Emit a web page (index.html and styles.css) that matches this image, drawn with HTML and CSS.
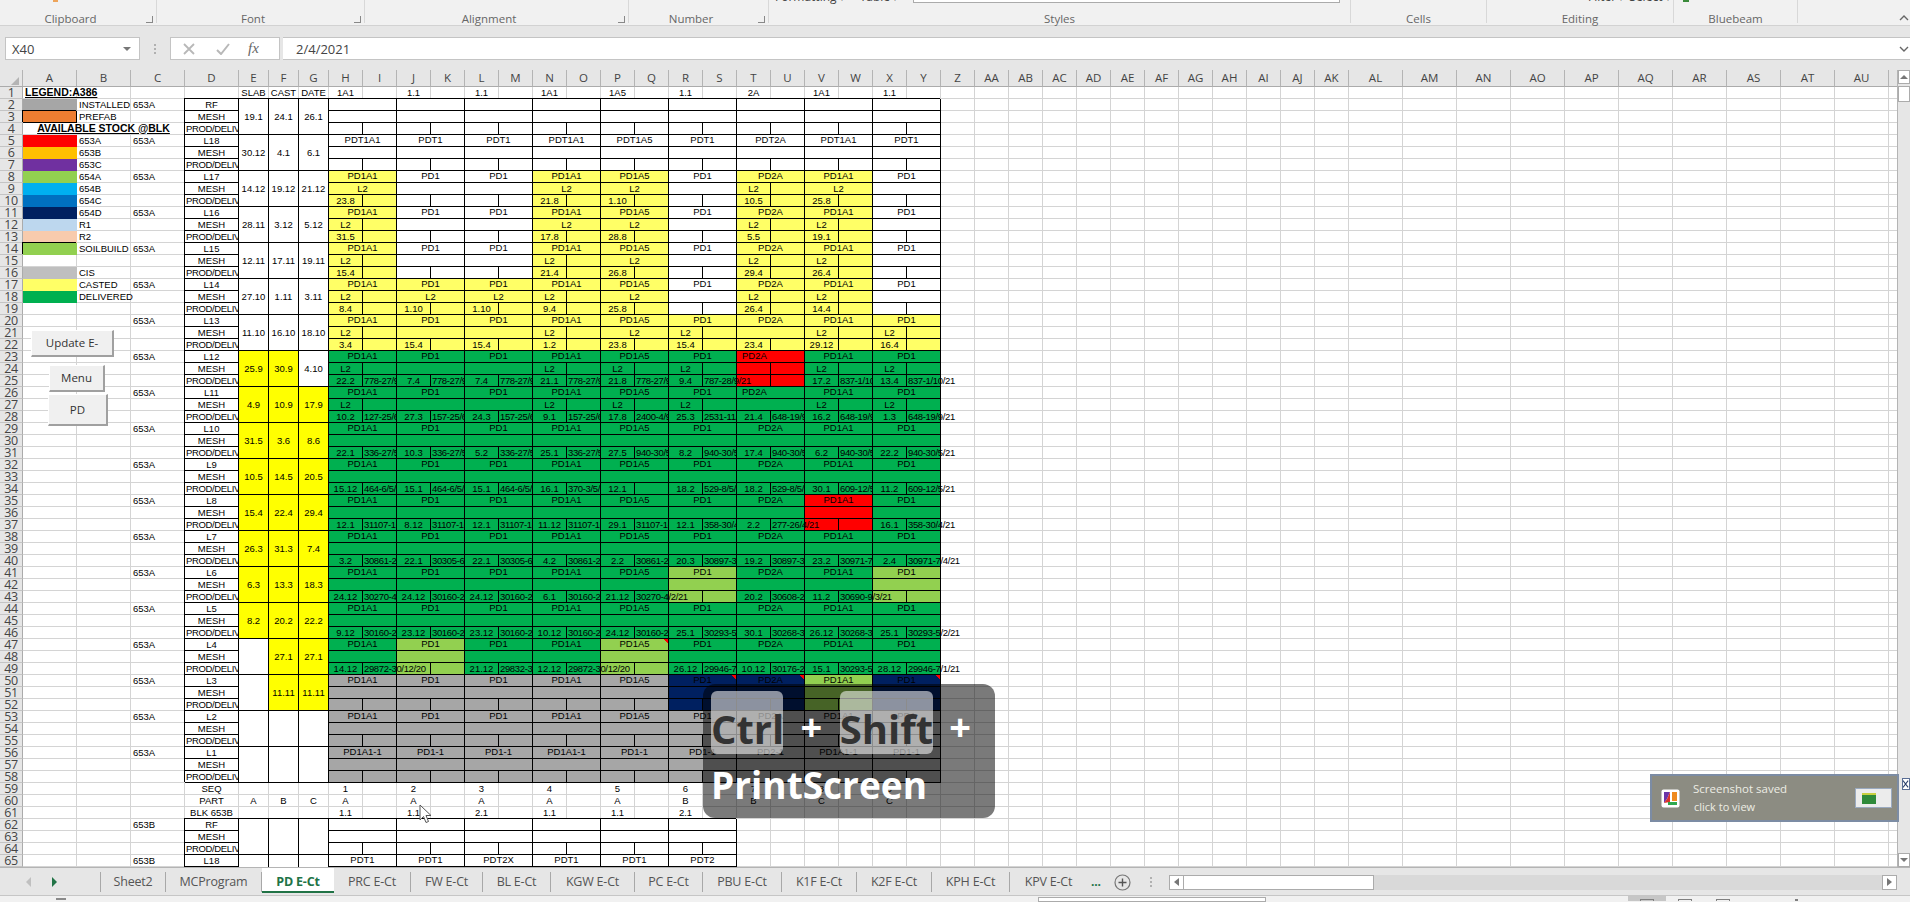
FILE: index.html
```html
<!DOCTYPE html>
<html>
	<head>
		<meta charset="UTF-8">
		<title>PD E-Ct - Excel</title>
		<link rel="stylesheet" href="styles.css">
	</head>

	<body>
		<div class="page">
			<div class="ribbon">
				<div class="group launch clip-group">
					<div class="peek"><i class="orange-bit"></i></div>
					<div class="group-name">Clipboard</div>
				</div>
				<div class="group launch font-group">
					<div class="peek"></div>
					<div class="group-name">Font</div>
				</div>
				<div class="group launch align-group">
					<div class="peek"></div>
					<div class="group-name">Alignment</div>
				</div>
				<div class="group launch number-group">
					<div class="peek"></div>
					<div class="group-name">Number</div>
				</div>
				<div class="group styles-group">
					<div class="peek styles-peek">
						<span>Formatting <small>▾</small></span>
						<span>Table <small>▾</small></span>
						<i class="gallery"></i>
					</div>
					<div class="group-name">Styles</div>
				</div>
				<div class="group cells-group">
					<div class="peek"></div>
					<div class="group-name">Cells</div>
				</div>
				<div class="group editing-group">
					<div class="peek editing-peek">
						<span>Filter <small>▾</small></span>
						<span>Select <small>▾</small></span>
					</div>
					<div class="group-name">Editing</div>
				</div>
				<div class="group bluebeam-group">
					<div class="peek"><i class="green-bit"></i></div>
					<div class="group-name">Bluebeam</div>
				</div>
				<div class="ribbon-end">
					<svg width="10" height="6" viewBox="0 0 10 6"><path d="M1 5 L5 1 L9 5" fill="none" stroke="#666" stroke-width="1.4"/></svg>
				</div>
			</div>

			<div class="ribbon-gap"></div>

			<div class="formula-bar">
				<div class="name-box">
					<span>X40</span>
					<i class="name-arrow"></i>
				</div>
				<div class="grip"><i></i><i></i><i></i></div>
				<div class="fx-box">
					<svg width="12" height="12" viewBox="0 0 12 12"><path d="M1 1 L11 11 M11 1 L1 11" stroke="#b8b8b8" stroke-width="1.8"/></svg>
					<svg width="14" height="12" viewBox="0 0 14 12"><path d="M1 7 L5 11 L13 1" fill="none" stroke="#b8b8b8" stroke-width="2"/></svg>
					<span class="fx">fx</span>
				</div>
				<div class="formula-input">
					<span>2/4/2021</span>
					<svg width="10" height="6" viewBox="0 0 10 6"><path d="M1 1 L5 5 L9 1" fill="none" stroke="#666" stroke-width="1.4"/></svg>
				</div>
			</div>

			<div class="formula-gap"></div>

			<div class="sheet-row">
				<div class="sheet">
					<table class="grid" id="grid"></table>
					<button class="xl-btn btn-update">Update E-</button>
					<button class="xl-btn btn-menu">Menu</button>
					<button class="xl-btn btn-pd">PD</button>
					<i class="corner"></i>
				</div>
				<div class="vscroll">
					<div class="v-arrow"><i class="tri-up"></i></div>
					<div class="v-thumb"></div>
					<div class="v-arrow"><i class="tri-down"></i></div>
				</div>
			</div>

			<div class="tabbar">
				<div class="tab-nav">
					<i class="nav-left"></i>
					<i class="nav-right"></i>
				</div>
				<div class="tab tab-65">Sheet2</div>
				<div class="tab tab-97">MCProgram</div>
				<div class="tab active">PD E-Ct</div>
				<div class="tab tab-77">PRC E-Ct</div>
				<div class="tab tab-72">FW E-Ct</div>
				<div class="tab tab-68">BL E-Ct</div>
				<div class="tab tab-84">KGW E-Ct</div>
				<div class="tab tab-68">PC E-Ct</div>
				<div class="tab tab-79">PBU E-Ct</div>
				<div class="tab tab-75">K1F E-Ct</div>
				<div class="tab tab-75">K2F E-Ct</div>
				<div class="tab tab-78">KPH E-Ct</div>
				<div class="tab tab-77 tab-last">KPV E-Ct</div>
				<div class="tab-more">...</div>
				<div class="tab-add">
					<svg width="17" height="17" viewBox="0 0 17 17"><circle cx="8.5" cy="8.5" r="7.5" fill="none" stroke="#777" stroke-width="1.2"/><path d="M8.5 4.5 V12.5 M4.5 8.5 H12.5" stroke="#555" stroke-width="1.4"/></svg>
				</div>
				<div class="grip tab-grip"><i></i><i></i><i></i></div>
				<div class="hscroll">
					<div class="h-arrow"><i class="tri-left"></i></div>
					<div class="h-thumb"></div>
					<div class="h-track"></div>
					<div class="h-arrow"><i class="tri-right"></i></div>
				</div>
			</div>

			<div class="statusbar">
				<i class="status-mark"></i>
				<i class="status-box"></i>
				<i class="view view-on"><b></b></i>
				<i class="view"><b></b></i>
				<i class="view"><b></b></i>
				<i class="zoom-mark"></i>
			</div>

			<svg class="cursor" width="13" height="20" viewBox="0 0 13 20"><path d="M1 1 V16 L4.5 12.5 L7 18.5 L9.5 17.5 L7 11.5 H12 Z" fill="#fff" stroke="#555"/></svg>

			<div class="shot-keys">
				<div class="keys-row">
					<div class="key key-ctrl">Ctrl</div>
					<div class="plus">+</div>
					<div class="key key-shift">Shift</div>
					<div class="plus">+</div>
				</div>
				<div class="keys-word">PrintScreen</div>
			</div>

			<div class="toast">
				<svg class="toast-icon" width="19" height="19" viewBox="0 0 19 19">
					<rect x="0.5" y="0.5" width="18" height="18" rx="2" fill="#fff"/>
					<path d="M3 3 H9 L6 10 L3 14 Z" fill="#6a35a8"/>
					<path d="M3 14 L6 10 L9 3 V13 Z" fill="#d8332c"/>
					<rect x="11" y="3" width="5" height="9" fill="#ef8a1f"/>
					<rect x="7" y="13" width="9" height="3" fill="#2fa84f"/>
				</svg>
				<div class="toast-text">
					<div>Screenshot saved</div>
					<div class="toast-sub">click to view</div>
				</div>
				<div class="toast-thumb"><i></i></div>
			</div>
			<div class="toast-close">
				<svg width="7" height="10" viewBox="0 0 7 10"><path d="M0 1 L6 9 M6 1 L0 9" stroke="#2a3f6a" stroke-width="1.2"/></svg>
			</div>
		</div>
		<script src="script.js"></script>
	</body>
</html>
```

FILE: styles.css
```css
html, body {
	margin: 0;
	padding: 0;
}
.page {
	position: relative;
	display: flex;
	flex-direction: column;
	width: 1910px;
	height: 902px;
	overflow: hidden;
	background: #E6E6E6;
	font-family: "Open Sans", sans-serif;
}

/* ribbon */
.ribbon {
	display: flex;
	height: 27px;
	background: #F1F1F1;
	border-bottom: 1px solid #D2D2D2;
	box-sizing: border-box;
}
.group {
	position: relative;
	box-sizing: border-box;
	height: 23px;
	border-right: 1px solid #D8D8D8;
}
.group.launch {
	padding-right: 15px;
}
.group.launch::after {
	content: "";
	position: absolute;
	right: 3px;
	top: 16px;
	width: 6px;
	height: 6px;
	border-right: 1px solid #888;
	border-bottom: 1px solid #888;
}
.group-name {
	margin-top: 10px;
	height: 14px;
	line-height: 14px;
	font-size: 11.5px;
	color: #666;
	text-align: center;
}
.clip-group { width: 157px; }
.font-group { width: 208px; }
.align-group { width: 264px; }
.number-group { width: 140px; }
.styles-group { width: 582px; }
.cells-group { width: 136px; }
.editing-group { width: 187px; }
.bluebeam-group { width: 124px; }
.ribbon-end {
	flex: 1;
	display: flex;
	justify-content: flex-end;
	padding: 15px 1px 0 0;
}
.peek {
	display: flex;
	align-items: flex-end;
	height: 2px;
	overflow: hidden;
	font-size: 12px;
	line-height: 14px;
	color: #444;
}
.peek small {
	font-size: 8px;
}
.styles-peek {
	height: 5px;
	margin-bottom: -3px;
	padding-left: 6px;
	gap: 16px;
}
.editing-peek {
	height: 5px;
	margin-bottom: -3px;
	padding-left: 101px;
	gap: 6px;
}
.gallery {
	display: block;
	box-sizing: border-box;
	width: 427px;
	height: 3px;
	margin-bottom: 2px;
	background: #FFF;
	border: 1px solid #ABABAB;
	border-top: none;
}
.orange-bit {
	display: block;
	width: 5px;
	height: 2px;
	margin-left: 53px;
	background: #EDA45A;
}
.green-bit {
	display: block;
	width: 6px;
	height: 2px;
	margin-left: 9px;
	background: #3A8A3A;
}
.ribbon-gap {
	height: 11px;
	background: #E6E6E6;
}

/* formula bar */
.formula-bar {
	display: flex;
	height: 23px;
	background: #E6E6E6;
}
.name-box {
	display: flex;
	align-items: center;
	justify-content: space-between;
	box-sizing: border-box;
	width: 135px;
	margin-left: 5px;
	padding: 0 8px 0 6px;
	background: #FFF;
	border: 1px solid #C4C4C4;
	font-size: 13px;
	color: #444;
}
.name-arrow {
	width: 0;
	height: 0;
	border-top: 4px solid #777;
	border-left: 4px solid transparent;
	border-right: 4px solid transparent;
}
.grip {
	display: flex;
	flex-direction: column;
	justify-content: center;
	gap: 2px;
	width: 30px;
	align-items: center;
}
.grip i {
	display: block;
	width: 2px;
	height: 2px;
	background: #B0B0B0;
}
.fx-box {
	display: flex;
	align-items: center;
	box-sizing: border-box;
	width: 110px;
	padding-left: 12px;
	gap: 21px;
	background: #FFF;
	border: 1px solid #C4C4C4;
}
.fx {
	margin-left: -3px;
	font-family: "Liberation Serif", serif;
	font-style: italic;
	font-size: 15px;
	color: #666;
}
.formula-input {
	flex: 1;
	display: flex;
	align-items: center;
	justify-content: space-between;
	box-sizing: border-box;
	margin-left: 3px;
	padding: 0 1px 0 13px;
	background: #FFF;
	border-top: 1px solid #C4C4C4;
	border-bottom: 1px solid #C4C4C4;
	font-size: 13px;
	color: #444;
}
.formula-gap {
	height: 10px;
}

/* sheet */
.sheet-row {
	display: flex;
	height: 797px;
	border-bottom: 1px solid #B4B4B4;
	box-sizing: content-box;
}
.sheet {
	position: relative;
	width: 1898px;
	overflow: hidden;
	background: #FFF;
	box-sizing: border-box;
	border-right: 1px solid #B4B4B4;
}
.grid {
	table-layout: fixed;
	width: 1898px;
	border-collapse: separate;
	border-spacing: 0;
	font-family: "Liberation Sans", sans-serif;
	font-size: 9.5px;
	color: #000;
}
.grid td, .grid th {
	box-sizing: border-box;
	height: 12px;
	padding: 0;
	overflow: hidden;
	white-space: nowrap;
	line-height: 11px;
	text-align: center;
	font-weight: normal;
	border-right: 1px solid #D4D4D4;
	border-bottom: 1px solid #D4D4D4;
}
.grid thead th {
	height: 16px;
	background: #E6E6E6;
	border-right: 1px solid #B4B4B4;
	border-bottom: 1px solid #ABABAB;
	font-family: "Open Sans", sans-serif;
	font-size: 11.5px;
	line-height: 16px;
	color: #444;
}
.grid tbody th {
	background: #E6E6E6;
	border-right: 1px solid #ABABAB;
	border-bottom: 1px solid #C4C4C4;
	font-family: "Open Sans", sans-serif;
	font-size: 12.5px;
	letter-spacing: -0.4px;
	line-height: 11px;
	color: #444;
}
.grid tr.top td, .grid tr.top th {
	height: 11px;
}
.grid td.txt {
	text-align: left;
	padding-left: 2px;
}
.grid td.spill {
	overflow: visible;
}
.grid td.tight {
	text-align: left;
	padding-left: 1px;
	letter-spacing: -0.35px;
}
.grid td.lab {
	line-height: 10px;
	padding-bottom: 1px;
}
.grid td.lab-left {
	text-align: left;
	padding-left: 5px;
}
.grid td.head {
	font-weight: bold;
	text-decoration: underline;
	font-size: 10.5px;
}
.grid td.box {
	border-right-color: #000;
	border-bottom-color: #000;
	box-shadow: -1px -1px 0 #000;
}
.grid td.note {
	background-image: linear-gradient(225deg, #FF0000 3.5px, transparent 3.5px);
}

/* fills, legend ones hide their gridlines */
.f-installed { background-color: #A6A6A6; }
.f-prefab { background-color: #ED7D31; }
.grid td.f-red { background-color: #FF0000; }
.f-amber { background-color: #FFC000; }
.f-purple { background-color: #7030A0; }
.f-lime { background-color: #92D050; }
.f-sky { background-color: #00B0F0; }
.f-blue { background-color: #0070C0; }
.f-navy { background-color: #002060; }
.f-pale { background-color: #BDD7EE; }
.f-peach { background-color: #F8CBAD; }
.f-silver { background-color: #BFBFBF; }
.f-cast { background-color: #FFFF66; }
.f-done { background-color: #00B050; }
.f-sun { background-color: #FFFF00; }
.grid td.legend.f-installed { border-color: #A6A6A6; }
.grid td.legend.f-red { border-color: #FF0000; }
.grid td.legend.f-amber { border-color: #FFC000; }
.grid td.legend.f-purple { border-color: #7030A0; }
.grid td.legend.f-lime { border-color: #92D050; }
.grid td.legend.f-sky { border-color: #00B0F0; }
.grid td.legend.f-blue { border-color: #0070C0; }
.grid td.legend.f-navy { border-color: #002060; }
.grid td.legend.f-pale { border-color: #BDD7EE; }
.grid td.legend.f-peach { border-color: #F8CBAD; }
.grid td.legend.f-silver { border-color: #BFBFBF; }
.grid td.legend.f-cast { border-color: #FFFF66; }
.grid td.legend.f-done { border-color: #00B050; }

/* macro buttons on the sheet */
.xl-btn {
	position: absolute;
	padding: 0;
	background: #F0F0F0;
	border: none;
	border-top: 1px solid #FFF;
	border-left: 1px solid #FFF;
	border-right: 2px solid #A0A0A0;
	border-bottom: 2px solid #A0A0A0;
	font-family: "Open Sans", sans-serif;
	font-size: 11.5px;
	color: #333;
}
.btn-update { left: 31px; top: 260px; width: 83px; height: 27px; }
.btn-menu { left: 49px; top: 295px; width: 56px; height: 27px; }
.btn-pd { left: 48px; top: 324px; width: 60px; height: 32px; }
.corner {
	position: absolute;
	left: 11px;
	top: 7px;
	width: 0;
	height: 0;
	border-bottom: 8px solid #B4B4B4;
	border-left: 8px solid transparent;
}

/* scrollbars */
.vscroll {
	display: flex;
	flex-direction: column;
	width: 12px;
	background: #E6E6E6;
}
.v-arrow {
	display: flex;
	align-items: center;
	justify-content: center;
	height: 14px;
	background: #FFF;
	border: 1px solid #ABABAB;
	box-sizing: border-box;
}
.v-thumb {
	flex: 1;
	background: #FFF;
	border: 1px solid #ABABAB;
	box-sizing: border-box;
	max-height: 16px;
	margin-top: 2px;
	margin-bottom: auto;
}
.tri-up {
	border-bottom: 4px solid #777;
	border-left: 4px solid transparent;
	border-right: 4px solid transparent;
}
.tri-down {
	border-top: 4px solid #777;
	border-left: 4px solid transparent;
	border-right: 4px solid transparent;
}
.tri-left {
	border-right: 5px solid #777;
	border-top: 4px solid transparent;
	border-bottom: 4px solid transparent;
}
.tri-right {
	border-left: 5px solid #777;
	border-top: 4px solid transparent;
	border-bottom: 4px solid transparent;
}

/* sheet tabs */
.tabbar {
	display: flex;
	align-items: flex-start;
	height: 28px;
	background: #E6E6E6;
	font-size: 12.5px;
	letter-spacing: -0.2px;
	color: #555;
}
.tab-nav {
	box-sizing: border-box;
	display: flex;
	align-items: center;
	gap: 21px;
	width: 101px;
	height: 20px;
	margin-top: 4px;
	padding-left: 26px;
	border-right: 1px solid #A8A8A8;
}
.nav-left {
	border-right: 5px solid #C0C0C0;
	border-top: 5px solid transparent;
	border-bottom: 5px solid transparent;
}
.nav-right {
	border-left: 5px solid #217346;
	border-top: 5px solid transparent;
	border-bottom: 5px solid transparent;
}
.tab {
	box-sizing: border-box;
	height: 20px;
	margin-top: 4px;
	line-height: 20px;
	text-align: center;
	border-right: 1px solid #A8A8A8;
	white-space: nowrap;
}
.tab-65 { width: 65px; }
.tab-68 { width: 68px; }
.tab-72 { width: 72px; }
.tab-75 { width: 75px; }
.tab-77 { width: 77px; }
.tab-78 { width: 78px; }
.tab-79 { width: 79px; }
.tab-84 { width: 84px; }
.tab-97 { width: 96px; }
.tab-last {
	border-right: none;
}
.tab.active {
	width: 72px;
	height: 25px;
	margin-top: 0;
	line-height: 27px;
	background: #FFF;
	border-right: none;
	border-bottom: 2px solid #217346;
	font-weight: bold;
	color: #217346;
}
.tab-more {
	margin-top: 4px;
	margin-left: 4px;
	width: 11px;
	line-height: 20px;
	font-weight: bold;
	font-size: 12px;
	color: #217346;
}
.tab-add {
	margin-left: 12px;
	margin-top: 6px;
	height: 17px;
}
.tab-grip {
	width: 16px;
	margin-left: 12px;
	margin-top: 9px;
}
.hscroll {
	display: flex;
	width: 728px;
	height: 15px;
	margin-left: auto;
	margin-top: 7px;
	margin-right: 13px;
	background: #D9D9D9;
}
.h-arrow {
	display: flex;
	align-items: center;
	justify-content: center;
	box-sizing: border-box;
	width: 15px;
	background: #FFF;
	border: 1px solid #ABABAB;
}
.h-thumb {
	box-sizing: border-box;
	width: 190px;
	background: #FFF;
	border: 1px solid #ABABAB;
	border-left: none;
}
.h-track {
	flex: 1;
}

/* status bar */
.statusbar {
	display: flex;
	align-items: flex-start;
	flex: 1;
	background: #F1F1F1;
	border-top: 1px solid #C6C6C6;
}
.status-mark {
	width: 10px;
	height: 2px;
	margin-left: 56px;
	margin-top: 2px;
	background: #8A8A8A;
}
.status-box {
	box-sizing: border-box;
	width: 228px;
	height: 5px;
	margin-left: 972px;
	margin-top: 1px;
	background: #FFF;
	border: 1px solid #ABABAB;
}
.view {
	display: flex;
	justify-content: center;
	width: 38px;
	height: 5px;
	padding-top: 3px;
	box-sizing: border-box;
}
.view-on {
	margin-left: 362px;
	background: #C6C6C6;
}
.view b {
	display: block;
	box-sizing: border-box;
	width: 14px;
	height: 2px;
	border: 1px solid #808080;
	border-bottom: none;
}
.zoom-mark {
	width: 3px;
	height: 2px;
	margin-left: 53px;
	margin-top: 3px;
	background: #808080;
}

/* things that lie on top of the window */
.cursor {
	position: absolute;
	left: 419px;
	top: 804px;
}
.shot-keys {
	position: absolute;
	left: 703px;
	top: 684px;
	box-sizing: border-box;
	width: 292px;
	height: 134px;
	padding: 7px 8px;
	background: rgba(0, 0, 0, 0.52);
	border-radius: 12px;
	font-weight: bold;
	color: #FFF;
}
.keys-row {
	display: flex;
	align-items: center;
	height: 63px;
}
.key {
	height: 63px;
	padding-top: 10px;
	box-sizing: border-box;
	background: rgba(255, 255, 255, 0.55);
	border-radius: 6px;
	font-size: 40px;
	line-height: 56px;
	color: #333;
	text-align: center;
	white-space: nowrap;
}
.key-ctrl {
	width: 72px;
}
.key-shift {
	width: 94px;
}
.plus {
	width: 58px;
	padding-top: 6px;
	font-size: 38px;
	text-align: center;
}
.plus:last-child {
	width: 55px;
}
.keys-word {
	height: 60px;
	font-size: 37px;
	line-height: 60px;
	margin-top: 1px;
	white-space: nowrap;
}
.toast {
	position: absolute;
	left: 1650px;
	top: 774px;
	display: flex;
	align-items: center;
	box-sizing: border-box;
	width: 249px;
	height: 48px;
	padding: 0 5px 0 9px;
	background: #8C8C82;
	border: 2px solid #7C8CA4;
	font-size: 11.5px;
	color: #ECECE4;
}
.toast-text {
	flex: 1;
	margin-left: 13px;
	line-height: 17px;
	margin-top: -2px;
}
.toast-sub {
	margin-top: 1px;
	margin-left: 1px;
	font-size: 11px;
}
.toast-thumb {
	box-sizing: border-box;
	width: 37px;
	height: 20px;
	padding: 4px 0 0 6px;
	background: #ECECEC;
	border: 1px solid #9AAAC0;
}
.toast-thumb i {
	display: block;
	width: 14px;
	height: 9px;
	background: #2F8A3A;
	border-top: 2px solid #C8D040;
}
.toast-close {
	position: absolute;
	left: 1902px;
	top: 778px;
	display: flex;
	align-items: center;
	justify-content: center;
	width: 8px;
	height: 12px;
	background: #FFF;
	border: 1px solid #5A6E94;
	box-sizing: border-box;
}
```

FILE: script.js
```js
// builds the worksheet table from the block schedule

var COLS = ["A","B","C","D","E","F","G","H","I","J","K","L","M","N","O","P","Q","R","S","T","U","V","W","X","Y","Z",
	"AA","AB","AC","AD","AE","AF","AG","AH","AI","AJ","AK","AL","AM","AN","AO","AP","AQ","AR","AS","AT","AU",""];

function colWidth(i) {
	if (i < 4) return 54;
	if (i < 7) return 30;
	if (i < 37) return 34;
	if (i == 47) return 9;
	return 54;
}

var FILL = {y: "f-cast", g: "f-done", r: "f-red", l: "f-lime", a: "f-installed", n: "f-navy", s: "f-sun", w: ""};

var LEGEND = {
	2: ["f-installed", "INSTALLED"],
	3: ["f-prefab box", "PREFAB"],
	5: ["f-red", "653A"],
	6: ["f-amber", "653B"],
	7: ["f-purple", "653C"],
	8: ["f-lime", "654A"],
	9: ["f-sky", "654B"],
	10: ["f-blue", "654C"],
	11: ["f-navy", "654D"],
	12: ["f-pale", "R1"],
	13: ["f-peach", "R2"],
	14: ["f-lime box", "SOILBUILD"],
	16: ["f-silver", "CIS"],
	17: ["f-cast", "CASTED"],
	18: ["f-done", "DELIVERED"]
};

var PDT = ["PDT1A1","PDT1","PDT1","PDT1A1","PDT1A5","PDT1","PDT2A","PDT1A1","PDT1"];
var PD = ["PD1A1","PD1","PD1","PD1A1","PD1A5","PD1","PD2A","PD1A1","PD1"];
var PD_1 = ["PD1A1-1","PD1-1","PD1-1","PD1A1-1","PD1-1","PD1-1","PD2-1","PD1A1-1","PD1-1"];
var NONE = ["","","","","","","","",""];

// mid row per floor: "." merged blank, "c" merged L2, "s" split with L2, "_" split blank
var FLOORS = [
	{lv: "RF", d: ["19.1","24.1","26.1"], dc: "www", lab: NONE, fill: "wwwwwwwww", mid: ".........", low: NONE},
	{lv: "L18", d: ["30.12","4.1","6.1"], dc: "www", lab: PDT, fill: "wwwwwwwww", mid: ".........", low: NONE},
	{lv: "L17", d: ["14.12","19.12","21.12"], dc: "www", lab: PD, fill: "ywwyywyyw", mid: "c..cc.sc.",
		low: ["23.8","","","21.8","1.10","","10.5","25.8",""]},
	{lv: "L16", d: ["28.11","3.12","5.12"], dc: "www", lab: PD, fill: "ywwyywyyw", mid: "s..cc.ss.",
		low: ["31.5","","","17.8","28.8","","5.5","19.1",""]},
	{lv: "L15", d: ["12.11","17.11","19.11"], dc: "www", lab: PD, fill: "ywwyywyyw", mid: "s..sc.ss.",
		low: ["15.4","","","21.4","26.8","","29.4","26.4",""]},
	{lv: "L14", d: ["27.10","1.11","3.11"], dc: "www", lab: PD, fill: "yyyyywyyw", mid: "sccsc.ss.",
		low: ["8.4","1.10","1.10","9.4","25.8","","26.4","14.4",""]},
	{lv: "L13", d: ["11.10","16.10","18.10"], dc: "www", lab: PD, fill: "yyyyyyyyy", mid: "s..scs.ss",
		low: ["3.4","15.4","15.4","1.2","23.8","15.4","23.4","29.12","16.4"]},
	{lv: "L12", d: ["25.9","30.9","4.10"], dc: "ssw", lab: PD, fill: "ggggggrgg", mid: "s..sss_ss", left: 6,
		low: ["22.2 778-27/9/21","7.4 778-27/9/21","7.4 778-27/9/21","21.1 778-27/9/21","21.8 778-27/9/21",
			"9.4 787-28/9/21","","17.2 837-1/10/21","13.4 837-1/10/21"]},
	{lv: "L11", d: ["4.9","10.9","17.9"], dc: "sss", lab: PD, fill: "ggggggggg", mid: "s..sss.ss", left: 6,
		low: ["10.2 127-25/6/21","27.3 157-25/6/21","24.3 157-25/6/21","9.1 157-25/6/21","17.8 2400-4/9/21",
			"25.3 2531-11/9/21","21.4 648-19/9/21","16.2 648-19/9/21","1.3 648-19/9/21"]},
	{lv: "L10", d: ["31.5","3.6","8.6"], dc: "sss", lab: PD, fill: "ggggggggg", mid: ".........",
		low: ["22.1 336-27/5/21","10.3 336-27/5/21","5.2 336-27/5/21","25.1 336-27/5/21","27.5 940-30/5/21",
			"8.2 940-30/5/21","17.4 940-30/5/21","6.2 940-30/5/21","22.2 940-30/5/21"]},
	{lv: "L9", d: ["10.5","14.5","20.5"], dc: "sss", lab: PD, fill: "ggggggggg", mid: ".........",
		low: ["15.12 464-6/5/21","15.1 464-6/5/21","15.1 464-6/5/21","16.1 370-3/5/21","12.1",
			"18.2 529-8/5/21","18.2 529-8/5/21","30.1 609-12/5/21","11.2 609-12/5/21"]},
	{lv: "L8", d: ["15.4","22.4","29.4"], dc: "sss", lab: PD, fill: "gggggggrg", mid: ".........",
		low: ["12.1 31107-16/4/21","8.12 31107-16/4/21","12.1 31107-16/4/21","11.12 31107-16/4/21","29.1 31107-16/4/21",
			"12.1 358-30/4/21","2.2 277-26/4/21","","16.1 358-30/4/21"]},
	{lv: "L7", d: ["26.3","31.3","7.4"], dc: "sss", lab: PD, fill: "ggggggggg", mid: ".........",
		low: ["3.2 30861-2/3/21","22.1 30305-6/2/21","22.1 30305-6/2/21","4.2 30861-2/3/21","2.2 30861-2/3/21",
			"20.3 30897-3/3/21","19.2 30897-3/3/21","23.2 30971-7/4/21","2.4 30971-7/4/21"]},
	{lv: "L6", d: ["6.3","13.3","18.3"], dc: "sss", lab: PD, fill: "ggggglggl", mid: ".........",
		low: ["24.12 30270-4/2/21","24.12 30160-2/2/21","24.12 30160-2/2/21","6.1 30160-2/2/21","21.12 30270-4/2/21",
			"","20.2 30608-2/3/21","11.2 30690-9/3/21",""]},
	{lv: "L5", d: ["8.2","20.2","22.2"], dc: "sss", lab: PD, fill: "ggggggggg", mid: ".........",
		low: ["9.12 30160-2/2/21","23.12 30160-2/2/21","23.12 30160-2/2/21","10.12 30160-2/2/21","24.12 30160-2/2/21",
			"25.1 30293-5/2/21","30.1 30268-3/2/21","26.12 30268-3/2/21","25.1 30293-5/2/21"]},
	{lv: "L4", d: ["","27.1","27.1"], dc: "wss", lab: PD, fill: "glgglgggg", mid: ".........", note: [4],
		low: ["14.12 29872-30/12/20","","21.12 29832-30/12/20","12.12 29872-30/12/20","",
			"26.12 29946-7/1/21","10.12 30176-2/2/21","15.1 30293-5/2/21","28.12 29946-7/1/21"]},
	{lv: "L3", d: ["","11.11","11.11"], dc: "wss", lab: PD, fill: "aaaaannln", mid: ".........", note: [5, 6, 8], low: NONE},
	{lv: "L2", d: ["","",""], dc: "www", lab: PD, fill: "aaaaaaaaa", mid: ".........", low: NONE},
	{lv: "L1", d: ["","",""], dc: "www", lab: PD_1, fill: "aaaaaaaaa", mid: ".........", low: NONE}
];

var LOWER = [
	{lv: "RF", lab: ["","","","","",""]},
	{lv: "L18", lab: ["PDT1","PDT1","PDT2X","PDT1","PDT1","PDT2"]}
];

function td(cls, text, span, rows) {
	var s = "<td";
	if (cls) s += ' class="' + cls + '"';
	if (span) s += ' colspan="' + span + '"';
	if (rows) s += ' rowspan="' + rows + '"';
	return s + ">" + (text || "") + "</td>";
}

function blanks(n) {
	var s = "";
	for (var i = 0; i < n; i++) s += "<td></td>";
	return s;
}

// column C and A/B legend part of a row
function sideCells(r, c) {
	var leg = LEGEND[r];
	var s = "";
	if (r == 4) {
		return td("head", "AVAILABLE STOCK @BLK", 3);
	}
	if (r == 1) {
		return td("txt spill head", "LEGEND:A386") + blanks(2);
	}
	if (leg) {
		s += td("legend " + leg[0]);
		s += td("txt spill", leg[1]);
	} else {
		s += blanks(2);
	}
	s += td("txt", c || "");
	return s;
}

// the block of a floor, three rows long
function floorRows(r0, f) {
	var rows = [];
	var names = [f.lv, "MESH", "PROD/DELIVERY"];
	for (var k = 0; k < 3; k++) {
		var r = r0 + k;
		var s = sideCells(r, k == 0 ? "653A" : "");
		s += td("box" + (k == 2 ? " tight" : ""), names[k]);
		if (k == 0) {
			for (var d = 0; d < 3; d++) {
				s += td("box " + FILL[f.dc.charAt(d) == "s" ? "s" : "w"], f.d[d], 0, 3);
			}
		}
		for (var p = 0; p < 9; p++) {
			var fc = FILL[f.fill.charAt(p)];
			if (k == 0) {
				var c0 = "box lab " + fc;
				if (f.left == p) c0 += " lab-left";
				if (f.note && f.note.indexOf(p) >= 0) c0 += " note";
				s += td(c0, f.lab[p], 2);
			} else if (k == 1) {
				var m = f.mid.charAt(p);
				if (m == ".") s += td("box " + fc, "", 2);
				if (m == "c") s += td("box " + fc, "L2", 2);
				if (m == "s") s += td("box " + fc, "L2") + td("box " + fc);
				if (m == "_") s += td("box " + fc) + td("box " + fc);
			} else {
				var parts = f.low[p].split(" ");
				var nextEmpty = p == 8 || f.low[p + 1] == "";
				var right = "box tight " + fc + (nextEmpty ? " spill" : "");
				s += td("box " + fc, parts[0]) + td(right, parts[1]);
			}
		}
		s += blanks(23);
		rows.push(s);
	}
	return rows;
}

function lowerRows(r0, f) {
	var rows = [];
	var names = [f.lv, "MESH", "PROD/DELIVERY"];
	for (var k = 0; k < 3; k++) {
		var s = sideCells(r0 + k, k == 0 ? "653B" : "");
		s += td("box" + (k == 2 ? " tight" : ""), names[k]);
		if (k == 0) {
			for (var d = 0; d < 3; d++) s += td("box", "", 0, 3);
		}
		for (var p = 0; p < 6; p++) {
			if (k == 2) s += td("box") + td("box");
			else s += td("box lab", k == 0 ? f.lab[p] : "", 2);
		}
		s += blanks(29);
		rows.push(s);
	}
	return rows;
}

function keyRow(r, name, abc, vals) {
	var s = sideCells(r, "") + td("", name);
	for (var d = 0; d < 3; d++) s += td("", abc[d]);
	for (var p = 0; p < 9; p++) s += td("", vals[p]) + "<td></td>";
	return s + blanks(23);
}

function build() {
	var html = "<colgroup><col style=\"width:23px\">";
	var head = "<thead><tr><th></th>";
	COLS.forEach(function(n, i) {
		html += '<col style="width:' + colWidth(i) + 'px">';
		head += "<th>" + n + "</th>";
	});
	html += "</colgroup>" + head + "</tr></thead><tbody>";

	var rows = {};
	// row 1
	var first = sideCells(1) + blanks(1) + td("spill", "SLAB") + td("spill", "CAST") + td("spill", "DATE");
	["1A1","1.1","1.1","1A1","1A5","1.1","2A","1A1","1.1"].forEach(function(t) {
		first += td("", t) + "<td></td>";
	});
	rows[1] = first + blanks(23);

	var r = 2;
	FLOORS.forEach(function(f) {
		floorRows(r, f).forEach(function(x, k) { rows[r + k] = x; });
		r += 3;
	});
	rows[59] = keyRow(59, "SEQ", ["","",""], ["1","2","3","4","5","6","7","8","9"]);
	rows[60] = keyRow(60, "PART", ["A","B","C"], ["A","A","A","A","A","B","B","C","C"]);
	rows[61] = keyRow(61, "BLK 653B", ["","",""], ["1.1","1.1","2.1","1.1","1.1","2.1","","",""]);
	r = 62;
	LOWER.forEach(function(f) {
		lowerRows(r, f).forEach(function(x, k) { rows[r + k] = x; });
		r += 3;
	});

	for (var i = 1; i <= 67; i++) {
		html += "<tr" + (i == 1 ? ' class="top"' : "") + "><th>" + i + "</th>" + rows[i] + "</tr>";
	}
	document.getElementById("grid").innerHTML = html + "</tbody>";
}

build();
```
